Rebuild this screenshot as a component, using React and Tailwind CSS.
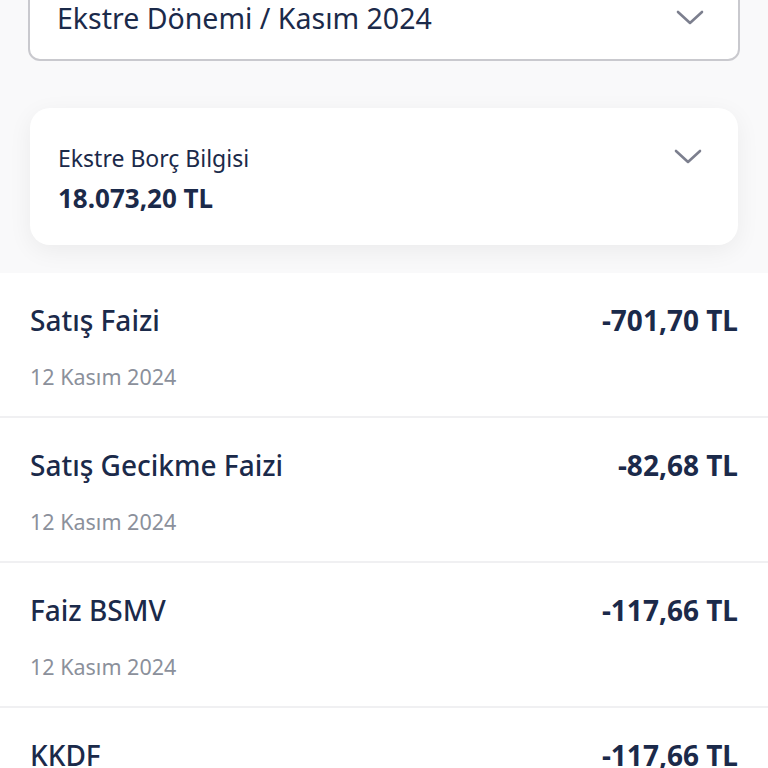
import React from 'react';

// Statement transaction detail screen

const rows = [
    { title: 'Satış Faizi', date: '12 Kasım 2024', amount: '-701,70 TL' },
    { title: 'Satış Gecikme Faizi', date: '12 Kasım 2024', amount: '-82,68 TL' },
    { title: 'Faiz BSMV', date: '12 Kasım 2024', amount: '-117,66 TL' },
    { title: 'KKDF', date: '12 Kasım 2024', amount: '-117,66 TL' },
];

const Chevron = () => (
    <svg width="28" height="16" viewBox="0 0 28 16" fill="none">
        <polyline points="2,2 14,13 26,2" stroke="#7c7f8e" strokeWidth="2.6" strokeLinecap="round" strokeLinejoin="round" />
    </svg>
);

function App() {
    return (
        <div className="w-[768px] h-[768px] overflow-hidden bg-white text-[#1b2a4a]" style={{ fontFamily: '"Noto Sans", "Open Sans", sans-serif' }}>
            {/* Header area */}
            <div className="bg-[#f9f9fa] px-[28px] pb-[28px]">
                <div className="-mt-[40px] h-[101px] rounded-[12px] border-2 border-[#c9c9ce] bg-white flex items-end justify-between pl-[27px] pr-[34px] pb-[23px]">
                    <span className="text-[28.5px] leading-[36px]">Ekstre Dönemi / Kasım 2024</span>
                    <span className="mb-[10px]"><Chevron /></span>
                </div>

                <div className="mt-[47px] mx-[2px] h-[137px] rounded-[20px] bg-white shadow-[0_6px_24px_rgba(0,0,0,0.06)] flex justify-between pl-[28px] pr-[36px] pt-[35px]">
                    <div className="flex flex-col gap-[8px]">
                        <span className="text-[23px] leading-[30px]">Ekstre Borç Bilgisi</span>
                        <span className="text-[26px] leading-[34px] font-bold">18.073,20 TL</span>
                    </div>
                    <span className="mt-[6px]"><Chevron /></span>
                </div>
            </div>

            {/* Transaction list */}
            <div>
                {rows.map((r, i) => (
                    <div key={i} className="px-[30px] pt-[29px] pb-[24px] border-b-2 border-[#f0f0f2]">
                        <div className="flex justify-between items-center">
                            <span className="text-[28px] leading-[36px] font-medium">{r.title}</span>
                            <span className="text-[28px] leading-[36px] font-bold">{r.amount}</span>
                        </div>
                        <div className="mt-[24px] text-[21.5px] leading-[30px] text-[#8b909b]">{r.date}</div>
                    </div>
                ))}
            </div>
        </div>
    );
}

export default App;
